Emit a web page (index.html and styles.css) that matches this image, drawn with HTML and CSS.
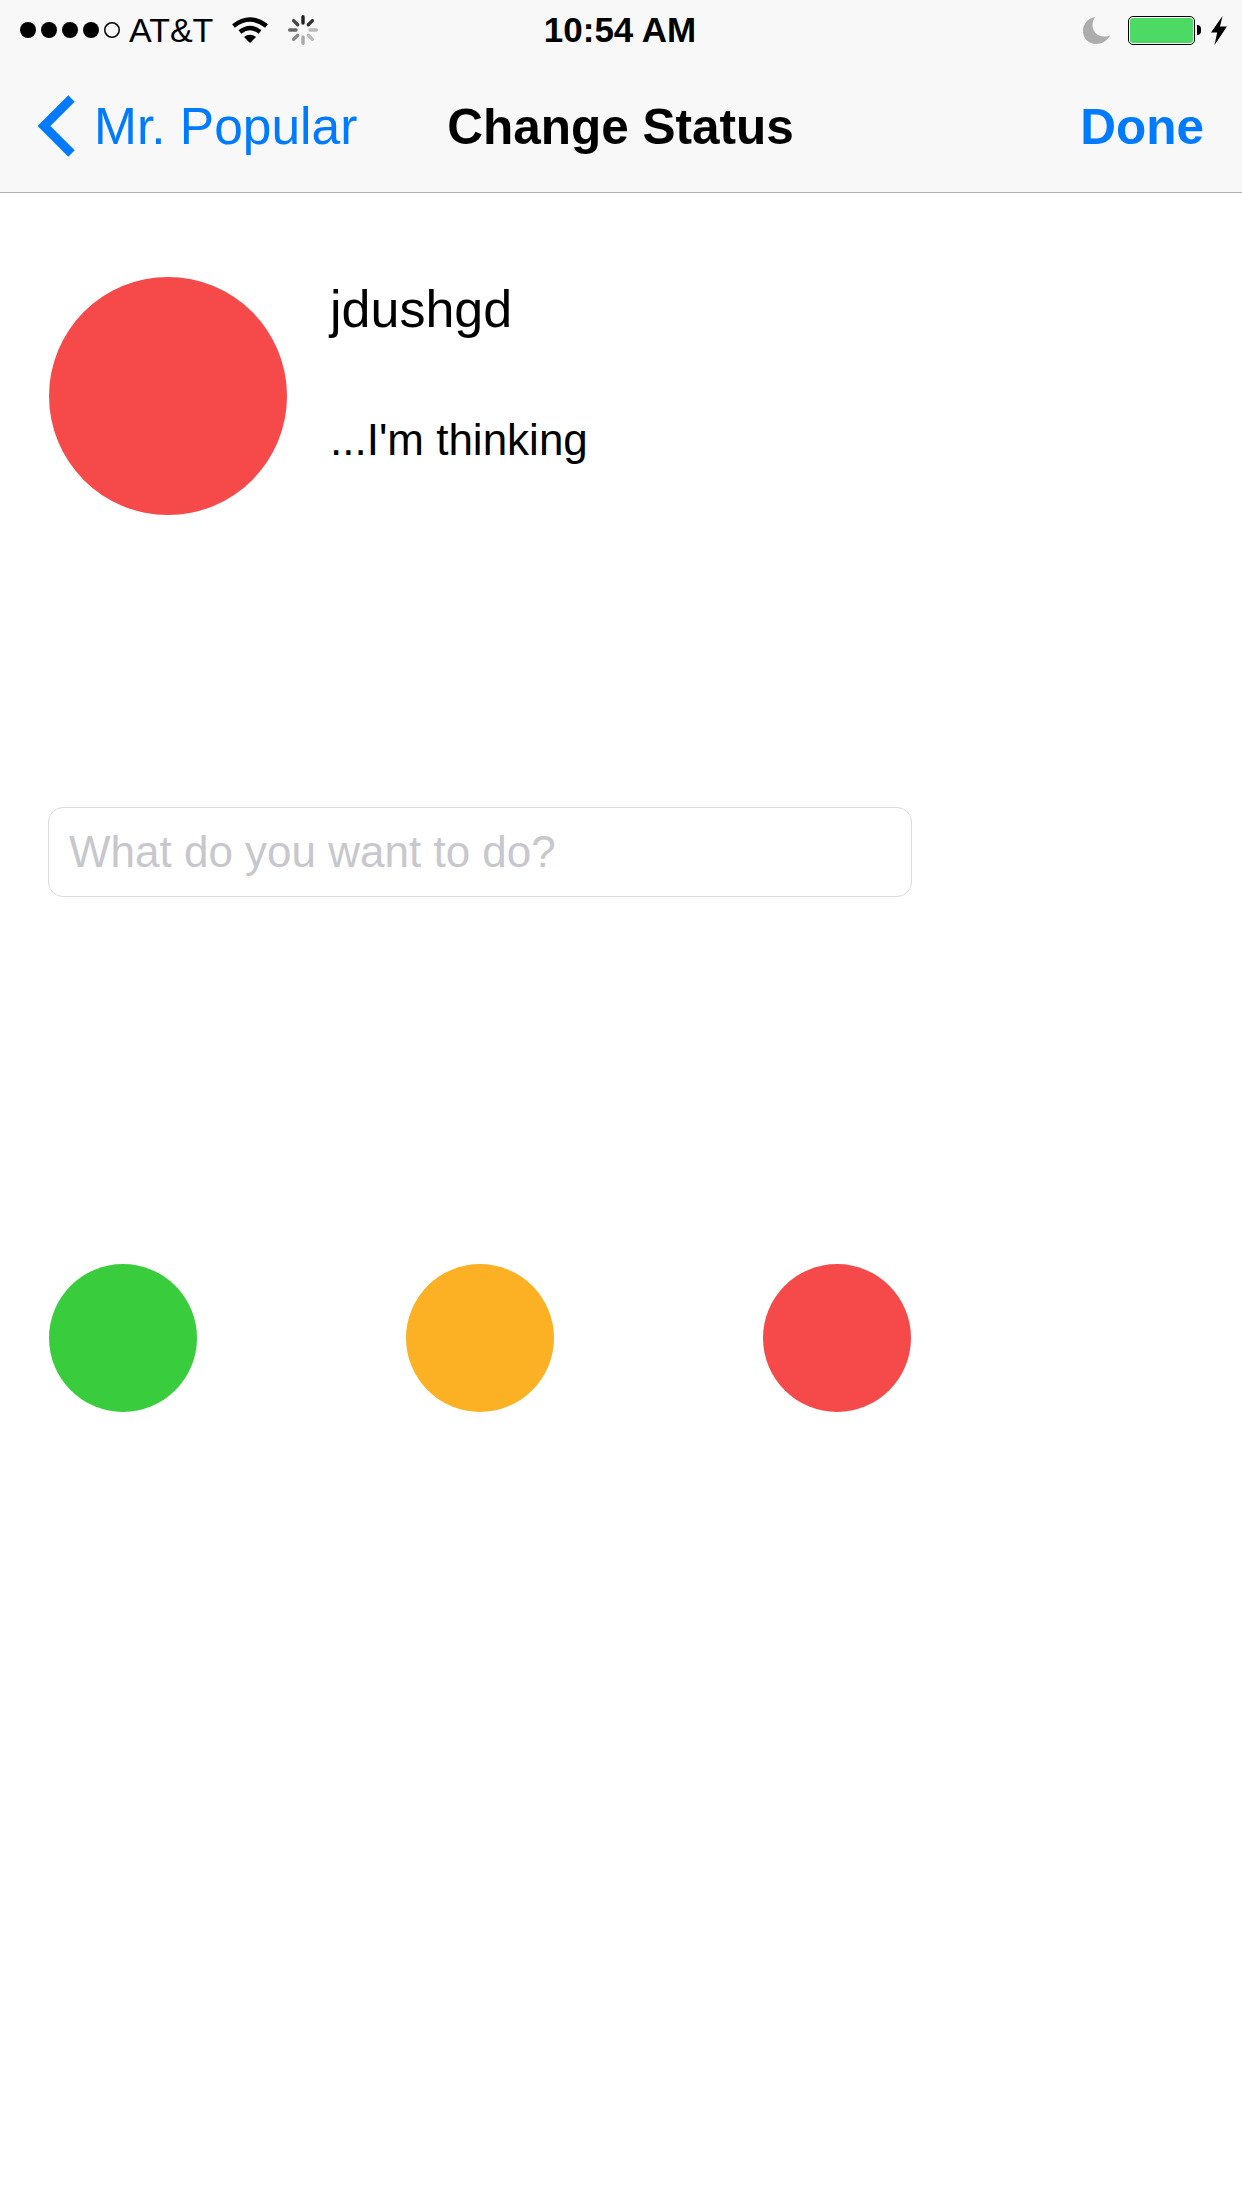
FILE: index.html
```html
<!DOCTYPE html>
<html>

<head>
    <title>Change Status</title>
    <link rel="stylesheet" href="styles.css">
</head>

<body>
    <div id="topbar">
        <div id="statusbar">
            <div class="status-left">
                <svg class="signal" width="100" height="16" viewBox="0 0 100 16">
                    <circle cx="8" cy="8" r="8" />
                    <circle cx="29" cy="8" r="8" />
                    <circle cx="50" cy="8" r="8" />
                    <circle cx="71" cy="8" r="8" />
                    <circle cx="92" cy="8" r="7.25" fill="none" stroke="#000" stroke-width="1.5" />
                </svg>
                <span class="carrier">AT&amp;T</span>
                <svg class="wifi" width="36" height="26" viewBox="0 0 36 26">
                    <path d="M1.500 9Q18 -4 34.500 9" fill="none" stroke="#000" stroke-width="4.500" />
                    <path d="M8 15Q18 7 28 15" fill="none" stroke="#000" stroke-width="4.500" />
                    <path d="M12 20Q18 15.500 24 20L18 26Z" />
                </svg>
                <svg class="spinner" width="30" height="30" viewBox="-15 -15 30 30" fill="none" stroke-width="3.400" stroke-linecap="round">
                    <path stroke="#222" d="M0 -13.300V-7" />
                    <path stroke="#333" d="M9.400 -9.400L5.300 -5.300" />
                    <path stroke="#bbb" d="M13.300 0H7" />
                    <path stroke="#bbb" d="M9.400 9.400L5.300 5.300" />
                    <path stroke="#aaa" d="M0 13.300V7" />
                    <path stroke="#888" d="M-9.400 9.400L-5.300 5.300" />
                    <path stroke="#666" d="M-13.300 0H-7" />
                    <path stroke="#444" d="M-9.400 -9.400L-5.300 -5.300" />
                </svg>
            </div>
            <div class="status-time">10:54 AM</div>
            <div class="status-right">
                <svg class="moon" width="27" height="27" viewBox="0 0 27 27">
                    <path fill="#adadad" d="M12 0C4.500 1.500 0 7 0 14C0 21.500 5.800 27 13 27C19 27 24 24 27 18.500C25.500 19.300 23.500 19.600 21.500 19.600C14.500 19.600 9.500 14.500 9.500 8C9.500 5 10.500 2.500 12 0Z" />
                </svg>
                <div class="battery">
                    <div class="battery-fill"></div>
                </div>
                <div class="battery-nub"></div>
                <svg class="bolt" width="16" height="29" viewBox="0 0 16 29">
                    <path d="M11.500 0L0 16.500H6.200L3.500 29L16 10.500H9Z" />
                </svg>
            </div>
        </div>
        <div id="navbar">
            <a class="nav-back">
                <svg class="chevron" width="38" height="62" viewBox="0 0 38 62">
                    <path d="M34.500 3.500L7 31L34.500 58.500" fill="none" stroke="#007aff" stroke-width="9" />
                </svg>
                <span>Mr. Popular</span>
            </a>
            <div class="nav-title">Change Status</div>
            <a class="nav-done">Done</a>
        </div>
    </div>

    <div id="content">
        <div class="profile">
            <div class="avatar"></div>
            <div class="profile-text">
                <p class="profile-name">jdushgd</p>
                <p class="profile-status">...I'm thinking</p>
            </div>
        </div>

        <input class="status-input" type="text" placeholder="What do you want to do?">

        <div class="dots">
            <div class="dot green"></div>
            <div class="dot orange"></div>
            <div class="dot red"></div>
        </div>
    </div>
</body>

</html>
```

FILE: styles.css
```css
* {
    margin: 0;
    padding: 0;
    box-sizing: border-box;
}

body {
    width: 1242px;
    height: 2208px;
    overflow: hidden;
    background-color: white;
    color: black;
    font-family: 'Liberation Sans', Arial, sans-serif;
}

#topbar {
    height: 193px;
    background-color: #f8f8f8;
    border-bottom: 1px solid #b2b2b2;
}

#statusbar {
    display: grid;
    grid-template-columns: 1fr auto 1fr;
    align-items: center;
    height: 60px;
    padding: 0 15px 0 20px;
}

.status-left {
    display: flex;
    align-items: center;
}

.signal {
    margin-right: 9px;
}

.carrier {
    font-size: 34px;
    line-height: 60px;
}

.wifi {
    margin-left: 19px;
}

.spinner {
    margin-left: 20px;
}

.status-time {
    padding-right: 7px;
    font-size: 35px;
    font-weight: bold;
    line-height: 60px;
}

.status-right {
    display: flex;
    align-items: center;
    justify-content: flex-end;
}

.moon {
    margin-right: 18px;
}

.battery {
    width: 67px;
    height: 29px;
    padding: 1px;
    background-color: white;
    border: 1px solid black;
    border-radius: 5px;
}

.battery-fill {
    height: 100%;
    background-color: #4cd964;
    border-radius: 3px;
}

.battery-nub {
    width: 4px;
    height: 10px;
    margin-left: 2px;
    background-color: black;
    border-radius: 0 4px 4px 0;
}

.bolt {
    margin-left: 10px;
}

#navbar {
    display: grid;
    grid-template-columns: 1fr auto 1fr;
    align-items: center;
    height: 132px;
    padding: 0 38px 0 37px;
    font-size: 49.5px;
}

.nav-back {
    display: flex;
    align-items: center;
    font-size: 51.5px;
    color: #007aff;
}

.chevron {
    margin-right: 19px;
}

.nav-title {
    font-weight: bold;
}

.nav-done {
    justify-self: end;
    font-weight: bold;
    color: #007aff;
}

#content {
    padding: 84px 0 0 49px;
}

.profile {
    display: flex;
    align-items: flex-start;
    gap: 43px;
}

.avatar {
    width: 238px;
    height: 238px;
    border-radius: 50%;
    background-color: #f64a4a;
}

.profile-text {
    padding-top: 5px;
}

.profile-name {
    font-size: 52px;
    line-height: 54px;
}

.profile-status {
    margin-top: 80px;
    font-size: 44px;
    line-height: 48px;
}

.status-input {
    display: block;
    width: 864px;
    height: 90px;
    margin: 292px 0 0 -1px;
    padding: 0 20px;
    border: 1px solid #dcdcdc;
    border-radius: 15px;
    background-color: white;
    outline: none;
    font-family: inherit;
    font-size: 44px;
}

.status-input::placeholder {
    color: #c7c7cd;
    opacity: 1;
}

.dots {
    display: flex;
    justify-content: space-between;
    width: 862px;
    margin-top: 367px;
}

.dot {
    width: 148px;
    height: 148px;
    border-radius: 50%;
}

.green {
    background-color: #39cd3d;
}

.orange {
    background-color: #fbb123;
}

.red {
    background-color: #f64a4a;
}
```
